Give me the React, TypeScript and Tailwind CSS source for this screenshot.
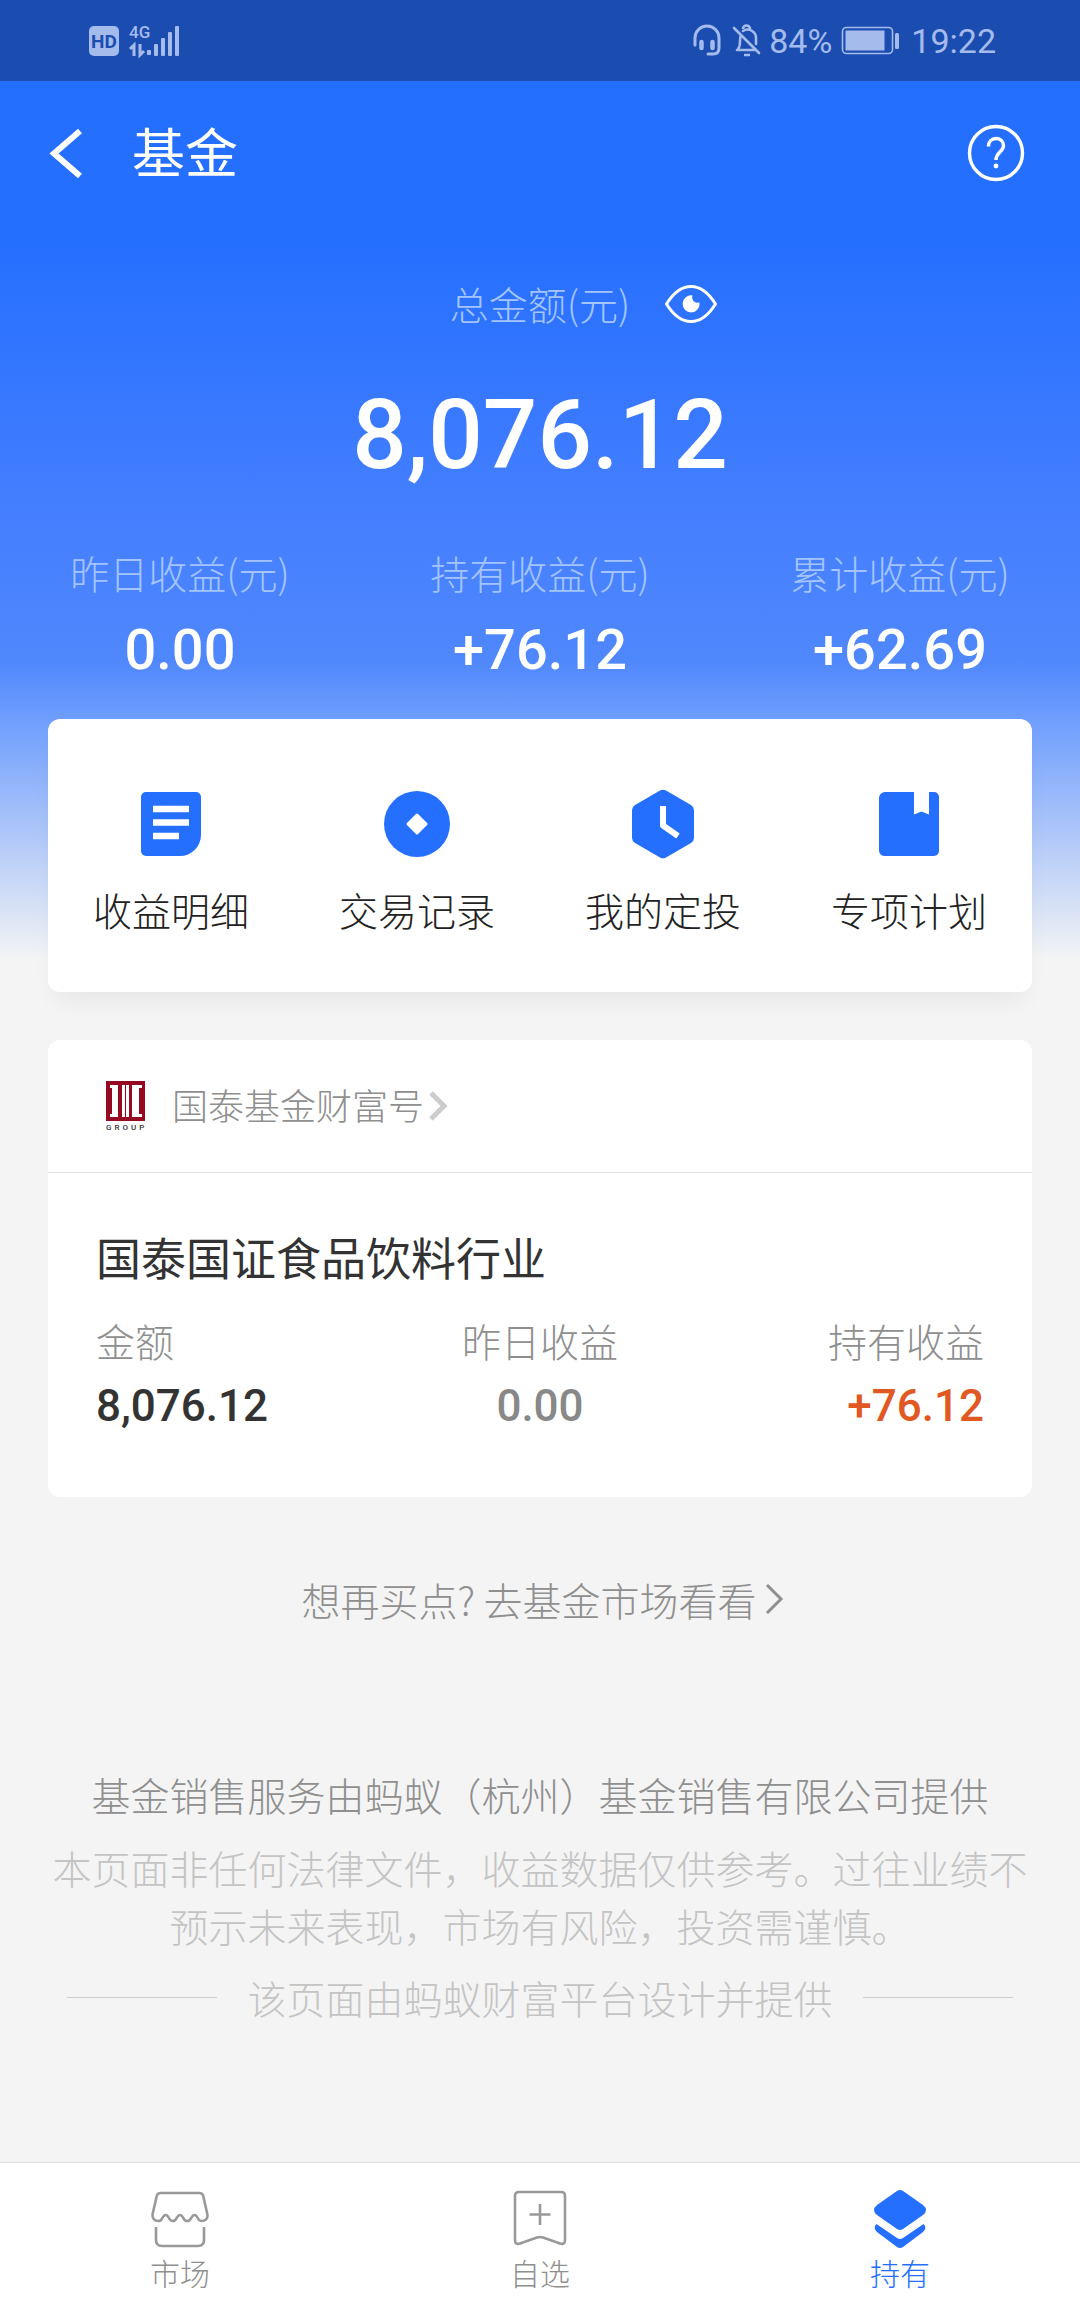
import type { ReactNode } from "react";

const stats = [
  { label: "昨日收益(元)", value: "0.00" },
  { label: "持有收益(元)", value: "+76.12" },
  { label: "累计收益(元)", value: "+62.69" },
];

const StatusBar = () => {
  return (
    <div className="flex h-[81px] items-center justify-between bg-[#1b4db1] pr-[84px] pl-[88px] font-['Roboto',sans-serif] text-[34px] leading-[40px] font-normal text-[#a5bbec]">
      <svg width="94" height="40" viewBox="0 -3 94 40" fill="currentColor">
        <rect x="1" y="2" width="30" height="30" rx="5" />
        <text x="16" y="24" textAnchor="middle" fontSize="19" fontWeight="700" fill="#1b4db1">
          HD
        </text>
        <text x="41" y="14" fontSize="17" fontWeight="500">
          4G
        </text>
        <path d="M42 25l4-4v11M52 20v11l4-4" fill="none" stroke="currentColor" strokeWidth="3" />
        <rect x="59" y="26" width="4" height="5" rx="1" />
        <rect x="66" y="20" width="4" height="12" rx="1" />
        <rect x="73" y="14" width="4" height="18" rx="1" />
        <rect x="80" y="8" width="4" height="24" rx="1" />
        <rect x="87" y="2" width="4" height="30" rx="1" />
      </svg>
      <div className="flex items-center">
        <svg width="30" height="34" viewBox="0 0 30 34" fill="none" stroke="currentColor" strokeLinecap="round">
          <path d="M3 21V14a12 12 0 0 1 24 0v10q0 6-6 6h-5" strokeWidth="3" />
          <path d="M9.500 18v6M20.500 18v6" strokeWidth="4.500" />
        </svg>
        <svg className="ml-[10px]" width="30" height="34" viewBox="0 0 30 34" fill="none" stroke="currentColor" strokeWidth="2.6">
          <path d="M2 4l25 25M5 26h17M6 25c2-2 2-4 2-8 0-2 0-4 1-6M11 7c6-4 13 1 13 7v6" strokeLinecap="round" />
          <path d="M11 5a3.500 3.500 0 0 1 7 0M12 31h6" />
        </svg>
        <span className="ml-[7px]">84%</span>
        <svg className="ml-[9px]" width="60" height="30" viewBox="0 0 60 30">
          <rect x="1.500" y="1.500" width="50" height="26" rx="4" fill="none" stroke="currentColor" strokeWidth="1.600" />
          <rect x="4.500" y="4.500" width="39" height="20" fill="currentColor" />
          <rect x="54" y="7" width="4" height="16" rx="1.500" fill="currentColor" />
        </svg>
        <span className="ml-[10px]">19:22</span>
      </div>
    </div>
  );
};

const NavBar = () => {
  return (
    <header className="flex h-[143px] items-center pr-[55px] pl-[48px] text-white">
      <button type="button" aria-label="返回">
        <svg width="40" height="52" viewBox="0 0 40 52" fill="none" stroke="currentColor" strokeWidth="6">
          <path d="M32 4L6 26.500l26 22.500" />
        </svg>
      </button>
      <h1 className="ml-[44px] pb-[6px] text-[53px] leading-[72px] font-normal">基金</h1>
      <button type="button" aria-label="帮助" className="ml-auto">
        <svg width="58" height="58" viewBox="0 0 58 58" fill="none" stroke="currentColor" strokeWidth="3.4">
          <circle cx="29" cy="29" r="26.500" />
          <path d="M21.500 22.500c0-5 3.200-8 7.500-8s7.500 3 7.500 7.200c0 6-7.500 6.300-7.500 14.300" />
          <circle cx="29" cy="42" r="2.400" fill="currentColor" stroke="none" />
        </svg>
      </button>
    </header>
  );
};

const Summary = () => {
  return (
    <section className="pt-[50px] text-center text-white">
      {/* left padding mirrors the eye button, so the label stays centred */}
      <div className="flex items-center justify-center pl-[88px]">
        <p className="text-[39px] leading-[58px] text-[#a3c4ff]">总金额(元)</p>
        <button type="button" aria-label="隐藏金额" className="ml-[34px]">
          <svg width="54" height="40" viewBox="0 0 54 40" fill="none">
            <path
              d="M2.500 21C10 9 18 3.500 27 3.500S44 9 51.500 21C44 33 36 38.500 27 38.500S10 33 2.500 21z"
              stroke="currentColor"
              strokeWidth="3"
              strokeLinejoin="round"
            />
            <path d="M28.500 12.500a8.500 8.500 0 1 0 7 7 5.500 5.500 0 0 1-7-7z" fill="currentColor" />
          </svg>
        </button>
      </div>
      <p className="mt-[47px] font-['Roboto',sans-serif] text-[96px] leading-[112px] font-medium">
        8,076.12
      </p>
      <dl className="mt-[52px] grid grid-cols-3">
        {stats.map(({ label, value }) => (
          <div key={label}>
            <dt className="text-[39px] leading-[58px] text-[#a3c4ff]">{label}</dt>
            <dd className="mt-[17px] font-['Roboto',sans-serif] text-[56px] leading-[64px] font-medium">
              {value}
            </dd>
          </div>
        ))}
      </dl>
    </section>
  );
};

const DetailIcon = () => (
  <svg width="72" height="72" viewBox="0 0 72 72">
    <path d="M11 4h50a5 5 0 0 1 5 5v38a21 21 0 0 1-21 21H11a5 5 0 0 1-5-5V9a5 5 0 0 1 5-5z" fill="#256fff" />
    <path d="M18 21h36M18 34.500h36M18 48h26" stroke="#fff" strokeWidth="6.500" />
  </svg>
);

const RecordIcon = () => (
  <svg width="72" height="72" viewBox="0 0 72 72">
    <circle cx="36" cy="36" r="33" fill="#256fff" />
    <path d="M36 27l9 9-9 9-9-9z" fill="#fff" stroke="#fff" strokeWidth="3" strokeLinejoin="round" />
  </svg>
);

const PlanIcon = () => (
  <svg width="72" height="72" viewBox="0 0 72 72">
    <path
      d="M33 2.500q3-1.700 6 0L64 17q3 2 3 5v28q0 3-3 5L39 69.500q-3 1.700-6 0L8 55q-3-2-3-5V22q0-3 3-5z"
      fill="#256fff"
    />
    <path d="M36 18v19.500l15 10.500" fill="none" stroke="#fff" strokeWidth="6" strokeLinejoin="round" />
  </svg>
);

const BookIcon = () => (
  <svg width="72" height="72" viewBox="0 0 72 72">
    <path
      d="M12 4h29v22.500l7.500-3 7.500 3V4h5a5 5 0 0 1 5 5v54a5 5 0 0 1-5 5H12a6 6 0 0 1-6-5V10a6 6 0 0 1 6-6z"
      fill="#256fff"
    />
  </svg>
);

const actions: { label: string; icon: ReactNode }[] = [
  { label: "收益明细", icon: <DetailIcon /> },
  { label: "交易记录", icon: <RecordIcon /> },
  { label: "我的定投", icon: <PlanIcon /> },
  { label: "专项计划", icon: <BookIcon /> },
];

const Actions = () => {
  return (
    <nav className="mx-12 mt-[37px] grid grid-cols-4 rounded-xl bg-white shadow-[0_16px_24px_-8px_rgba(0,0,0,0.06)]">
      {actions.map(({ label, icon }) => (
        <a
          key={label}
          href="#"
          className="flex flex-col items-center gap-[20px] pt-[69px] pb-[54px] text-[39px] leading-[58px] text-[#222222]"
        >
          {icon}
          {label}
        </a>
      ))}
    </nav>
  );
};

const CompanyLogo = () => (
  <svg width="42" height="50" viewBox="0 0 42 50">
    <rect width="39" height="40" fill="#950a20" />
    <path
      d="M4 4h8v32H4v-3h2V7H4zM16 4h7v32h-7zM26 4h10v3h-3v26h3v3H26z"
      fill="#fff"
    />
    <path d="M19.500 4v32" stroke="#950a20" strokeWidth="1" />
    <text x="0" y="49" fontSize="8" fill="#333" className="font-['Roboto',sans-serif] font-medium tracking-[3px]">
      GROUP
    </text>
  </svg>
);

const FundCard = () => {
  return (
    <section className="mx-12 mt-12 rounded-xl bg-white">
      <a
        href="#"
        className="flex h-[133px] items-center border-b border-[#e0e0e0] pl-[58px] text-[36px] leading-[54px] text-[#8f8f8f]"
      >
        <CompanyLogo />
        <span className="ml-[24px] pb-[4px]">国泰基金财富号</span>
        <svg className="ml-[3px]" width="24" height="32" viewBox="0 0 24 32" fill="none" stroke="#cccccc" strokeWidth="5">
          <path d="M4 3l13 13L4 29" />
        </svg>
      </a>
      <div className="px-12 pt-[54px] pb-[63px]">
        <h2 className="text-[45px] leading-[60px] font-normal text-[#333333]">国泰国证食品饮料行业</h2>
        <dl className="mt-[24px] grid grid-cols-3 text-[39px] leading-[58px] text-[#8f8f8f]">
          <div>
            <dt>金额</dt>
            <dd className="mt-[9px] font-['Roboto',sans-serif] text-[44px] leading-[56px] font-medium text-[#333333]">
              8,076.12
            </dd>
          </div>
          <div className="text-center">
            <dt>昨日收益</dt>
            <dd className="mt-[9px] font-['Roboto',sans-serif] text-[44px] leading-[56px] font-medium text-[#888888]">
              0.00
            </dd>
          </div>
          <div className="text-right">
            <dt>持有收益</dt>
            <dd className="mt-[9px] font-['Roboto',sans-serif] text-[44px] leading-[56px] font-medium text-[#e25822]">
              +76.12
            </dd>
          </div>
        </dl>
      </div>
    </section>
  );
};

const Disclaimer = () => {
  return (
    <footer className="mt-[137px] pb-[136px] text-center text-[39px] leading-[58px] text-[#c4c4c4]">
      <p className="text-[#8f8f8f]">基金销售服务由蚂蚁（杭州）基金销售有限公司提供</p>
      <p className="mt-[15px] px-[52px]">
        本页面非任何法律文件，收益数据仅供参考。过往业绩不预示未来表现，市场有风险，投资需谨慎。
      </p>
      <div className="mt-[14px] flex items-center justify-center gap-[30px]">
        <hr className="w-[150px] border-[#cccccc]" />
        <p>该页面由蚂蚁财富平台设计并提供</p>
        <hr className="w-[150px] border-[#cccccc]" />
      </div>
    </footer>
  );
};

const TabBar = () => {
  return (
    <nav className="mt-auto grid grid-cols-3 border-t border-[#e0e0e0] bg-white text-[30px] leading-[40px] text-[#8f8f8f]">
      <a href="#" className="flex flex-col items-center gap-[1px] pt-[24px] pb-[20px]">
        <svg width="64" height="64" viewBox="0 0 64 64" fill="none" stroke="#999999" strokeWidth="2.600" strokeLinejoin="round">
          <path d="M13 6h38q4 0 4.500 4L59.500 28c.5 4-2.500 6-6 6-4.300 0-3.500-6-7-6s-3 6-7.300 6-3.700-6-7.200-6-3 6-7.300 6-3.500-6-7-6-3 6-7.200 6c-4 0-6.500-3-6-6.500L8.500 10Q9 6 13 6z" />
          <path d="M8 40v13q0 6 6 6h36q6 0 6-6V40" />
        </svg>
        市场
      </a>
      <a href="#" className="flex flex-col items-center gap-[1px] pt-[24px] pb-[20px]">
        <svg width="64" height="64" viewBox="0 0 64 64" fill="none" stroke="#999999" strokeWidth="2.600" strokeLinejoin="round">
          <path d="M11 5h42q4 0 4 4v44q0 5-5 3.500l-17-6q-3-1-6 0l-17 6q-5 1.500-5-3.500V9q0-4 4-4z" />
          <path d="M32 17v21M21.500 27.500h21" />
        </svg>
        自选
      </a>
      <a href="#" aria-current="page" className="flex flex-col items-center gap-[1px] pt-[24px] pb-[20px] text-[#256fff]">
        <svg width="64" height="64" viewBox="0 0 64 64" fill="currentColor">
          <path d="M29 4q3-2 6 0l20 14q6 5 0 10L35 42q-3 2-6 0L9 28q-6-5 0-10z" />
          <path d="M8.500 37L29 51q3 2 6 0l20.500-14q4 4-.5 8L35 60q-3 2-6 0L9 45q-4.500-4-.5-8z" />
        </svg>
        持有
      </a>
    </nav>
  );
};

const App = () => {
  return (
    <div className="flex min-h-screen flex-col bg-[#f4f4f4] bg-[linear-gradient(180deg,#256fff_240px,#457fff_520px,#4f87fc_660px,#6f9efd_720px,#f4f4f4_960px)] font-['Noto_Sans_CJK_SC',sans-serif] font-light">
      <StatusBar />
      <NavBar />
      <main>
        <Summary />
        <Actions />
        <FundCard />
        <a
          href="#"
          className="mt-[73px] flex items-center justify-center pl-2 text-[39px] leading-[58px] text-[#8f8f8f]"
        >
          想再买点? 去基金市场看看
          <svg className="ml-[6px]" width="24" height="36" viewBox="0 0 24 36" fill="none" stroke="currentColor" strokeWidth="3">
            <path d="M4 4l14 14L4 32" />
          </svg>
        </a>
        <Disclaimer />
      </main>
      <TabBar />
    </div>
  );
};

export default App;
